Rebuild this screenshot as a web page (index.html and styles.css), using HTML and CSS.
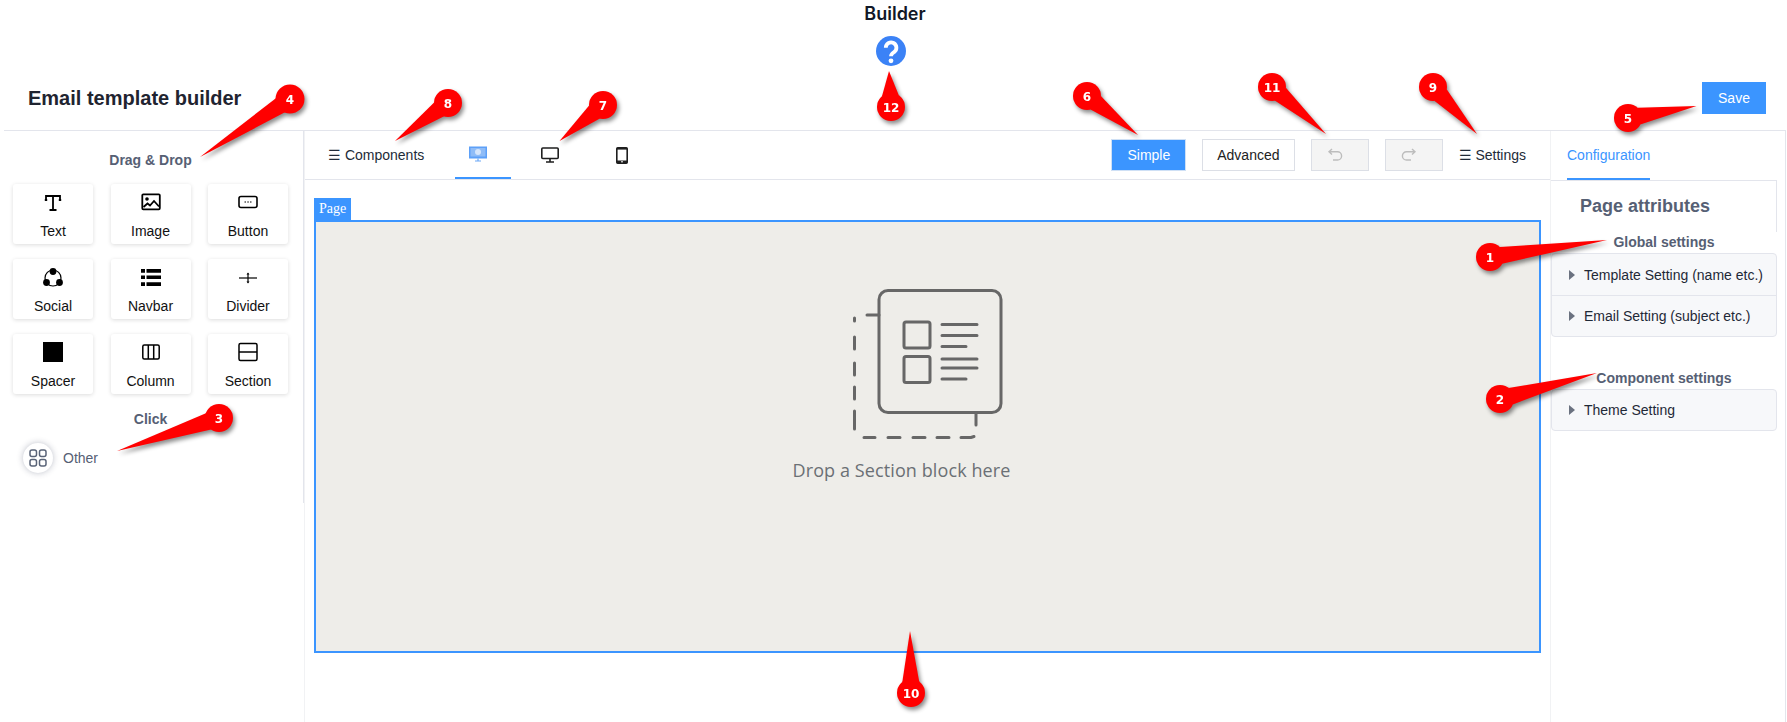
FILE: index.html
```html
<!DOCTYPE html>
<html lang="en">
<head>
  <meta charset="UTF-8" />
  <title>Builder</title>
  <link rel="stylesheet" href="styles.css">
</head>
<body>

  <div class="page-head">
    <h2 class="page-title">Builder</h2>
    <svg class="help-icon" viewBox="0 0 30 30">
      <circle cx="15" cy="15" r="15" fill="#3b82f6"/>
      <path d="M9.800 11.800a5.300 5.300 0 1 1 8.300 4.300c-1.900 1.300-3.100 2-3.100 4.200" fill="none" stroke="#fff" stroke-width="3.800"/>
      <circle cx="15" cy="24.800" r="2.400" fill="#fff"/>
    </svg>
  </div>

  <div class="title-row">
    <h1>Email template builder</h1>
    <button class="btn-save">Save</button>
  </div>

  <div class="builder">
    <aside class="left-panel">
      <div class="left-inner">
        <h4 class="panel-label">Drag &amp; Drop</h4>
        <div class="block-grid">
          <div class="block-card">
            <svg viewBox="0 0 20 20"><path d="M3 8V4h14v4M10 4v14M6.500 18h7M1.800 8h2.400M15.800 8h2.400" fill="none" stroke="#000" stroke-width="1.800"/></svg>
            <span>Text</span>
          </div>
          <div class="block-card">
            <svg viewBox="0 0 20 20"><rect x="1.300" y="2.300" width="17.500" height="15" rx="1" fill="none" stroke="#000" stroke-width="1.800"/><circle cx="6" cy="7" r="1.800"/><path d="M2.500 15l4-3.500 2.500 2 4-4.500 5 5.500" fill="none" stroke="#000" stroke-width="1.800"/></svg>
            <span>Image</span>
          </div>
          <div class="block-card">
            <svg viewBox="0 0 20 20"><rect x="1" y="4.500" width="18" height="11" rx="2" fill="none" stroke="#000" stroke-width="1.600"/><path d="M6.500 10h1.500M9.300 10h1.500M12 10h1.500" stroke="#000" stroke-width="1.200"/></svg>
            <span>Button</span>
          </div>
          <div class="block-card">
            <svg viewBox="0 0 20 20"><circle cx="10" cy="11" r="8" fill="none" stroke="#000" stroke-width="1.200"/><circle cx="10" cy="4.500" r="3.400"/><circle cx="3.500" cy="15.500" r="3.400"/><circle cx="16.500" cy="15.500" r="3.400"/></svg>
            <span>Social</span>
          </div>
          <div class="block-card">
            <svg viewBox="0 0 20 20"><path d="M0 2h4v3.700H0zM5.500 2H20v3.700H5.500zM0 8.500h4V12H0zM5.500 8.500H20V12H5.500zM0 15.300h4V19H0zM5.500 15.300H20V19H5.500z"/></svg>
            <span>Navbar</span>
          </div>
          <div class="block-card">
            <svg viewBox="0 0 20 20"><path d="M1 11h18" stroke="#000" stroke-width="1.200"/><path d="M10 6.500v9" stroke="#000" stroke-width="1.200"/><path d="M8.500 7.500L10 5.500l1.500 2zM8.500 14.500l1.500 2 1.500-2z"/></svg>
            <span>Divider</span>
          </div>
          <div class="block-card">
            <svg viewBox="0 0 20 20"><rect width="20" height="20"/></svg>
            <span>Spacer</span>
          </div>
          <div class="block-card">
            <svg viewBox="0 0 20 20"><rect x="1.800" y="3" width="16.400" height="14" rx="1.500" fill="none" stroke="#000" stroke-width="1.500"/><path d="M7.300 3v14M12.700 3v14" stroke="#000" stroke-width="1.500"/></svg>
            <span>Column</span>
          </div>
          <div class="block-card">
            <svg viewBox="0 0 20 20"><rect x="1" y="1.500" width="18" height="17" rx="1.500" fill="none" stroke="#000" stroke-width="1.500"/><path d="M1 10h18" stroke="#000" stroke-width="1.500"/></svg>
            <span>Section</span>
          </div>
        </div>
        <h4 class="panel-label panel-label-click">Click</h4>
        <div class="other-row">
          <div class="other-circle">
            <svg viewBox="0 0 18 18" fill="none" stroke="#5a6478" stroke-width="1.500"><rect x="1" y="1" width="6.500" height="6.500" rx="2"/><rect x="10.500" y="1" width="6.500" height="6.500" rx="2"/><rect x="1" y="10.500" width="6.500" height="6.500" rx="2"/><rect x="10.500" y="10.500" width="6.500" height="6.500" rx="2"/></svg>
          </div>
          <span>Other</span>
        </div>
      </div>
    </aside>

    <main class="center">
      <div class="toolbar">
        <div class="toolbar-left">
          <span class="menu-link">☰ Components</span>
          <div class="view-tab active">
            <svg viewBox="0 0 18 16"><rect y="0.500" width="18" height="12" fill="#5da0f8"/><rect x="1.500" y="2" width="15" height="8.500" fill="#8fbcf7"/><circle cx="9" cy="6" r="3" fill="#d5e5fb"/><path d="M6 15h6M9 12.500V15" stroke="#6aa8f8" stroke-width="1.200"/></svg>
          </div>
          <div class="view-tab">
            <svg viewBox="0 0 18 16"><rect x="0.800" y="1" width="16.400" height="10.500" rx="1" fill="none" stroke="#1f1f1f" stroke-width="1.600"/><path d="M9 11.500V15M5 15h8" stroke="#1f1f1f" stroke-width="1.600"/></svg>
          </div>
          <div class="view-tab">
            <svg class="phone" viewBox="0 0 12 17"><rect x="0.800" y="0.800" width="10.400" height="15.400" rx="1" fill="#fff" stroke="#1f1f1f" stroke-width="1.600"/><rect x="0.800" y="0.800" width="10.400" height="1.800" fill="#1f1f1f"/><rect x="0.800" y="13.500" width="10.400" height="2.700" fill="#1f1f1f"/><rect x="5" y="14.300" width="2" height="1" fill="#fff"/></svg>
          </div>
        </div>
        <div class="toolbar-right">
          <button class="btn-mode btn-on">Simple</button>
          <button class="btn-mode btn-adv">Advanced</button>
          <button class="btn-hist">
            <svg viewBox="0 0 16 14" fill="none" stroke="#bdbdbd" stroke-width="1.400"><path d="M5 1L2 3.800l3 2.800M2 3.800h8.500a4 4 0 0 1 0 8.200H6"/></svg>
          </button>
          <button class="btn-hist">
            <svg viewBox="0 0 16 14" fill="none" stroke="#bdbdbd" stroke-width="1.400"><path d="M11 1l3 2.800-3 2.800M14 3.800H5.500a4 4 0 0 0 0 8.200H10"/></svg>
          </button>
          <span class="menu-link">☰ Settings</span>
        </div>
      </div>

      <div class="canvas">
        <div class="page-tag">Page</div>
        <div class="page-box">
          <svg class="drop-icon" viewBox="0 0 150 150" fill="none" stroke="#676767" stroke-width="3" stroke-linecap="round">
            <rect x="26" y="1.500" width="122" height="122" rx="9"/>
            <path d="M26 26H14M123 124v12"/>
            <path d="M1.500 32v-3M1.500 48v12M1.500 74v12M1.500 98v12M1.500 122v18M11 148.500h11M35 148.500h12M60 148.500h12M84 148.500h12M108 148.500h10l3-1"/>
            <rect x="51" y="33" width="26" height="26" rx="2"/>
            <rect x="51" y="67.500" width="26" height="26" rx="2"/>
            <path d="M89 35.500h35M89 46.500h35M89 57.500h24M89 70h35M89 79h35M89 90h24"/>
          </svg>
          <p class="drop-text">Drop a Section block here</p>
        </div>
      </div>
    </main>

    <aside class="right-panel">
      <div class="right-tabs">
        <span class="right-tab">Configuration</span>
      </div>
      <div class="attr-box">
        <h3>Page attributes</h3>
      </div>
      <h4 class="panel-label">Global settings</h4>
      <div class="accordion">
        <div class="acc-item"><i class="caret"></i>Template Setting (name etc.)</div>
        <div class="acc-item"><i class="caret"></i>Email Setting (subject etc.)</div>
      </div>
      <h4 class="panel-label panel-label-comp">Component settings</h4>
      <div class="accordion accordion-single">
        <div class="acc-item"><i class="caret"></i>Theme Setting</div>
      </div>
    </aside>
  </div>

  <!-- numbered callouts drawn on top of the screenshot -->
  <svg class="callouts" viewBox="0 0 1787 722">
    <g class="pin"><path d="M200 157L285.400 112.100 276.200 97.900z"/><circle cx="290" cy="99" r="14.500"/><text x="290" y="103.500">4</text></g>
    <g class="pin"><path d="M395 141L444.100 116.300 434.100 102.500z"/><circle cx="448" cy="103" r="14"/><text x="448" y="107.500">8</text></g>
    <g class="pin"><path d="M559.500 141L599.900 118.500 589.100 105.500z"/><circle cx="603" cy="105" r="14"/><text x="603" y="109.500">7</text></g>
    <g class="pin"><path d="M889 71L898.900 95.500 881.900 96.500z"/><circle cx="891" cy="107" r="14"/><text x="891" y="111.500">12</text></g>
    <g class="pin"><path d="M1138 135L1090.500 109.400 1100.900 96z"/><circle cx="1087" cy="96" r="14"/><text x="1087" y="100.500">6</text></g>
    <g class="pin"><path d="M1326 134L1274.700 100.600 1285.900 87.800z"/><circle cx="1272" cy="87" r="14"/><text x="1272" y="91.500">11</text></g>
    <g class="pin"><path d="M1477 134L1434.300 100.800 1446.700 89.200z"/><circle cx="1433" cy="87" r="14"/><text x="1433" y="91.500">9</text></g>
    <g class="pin"><path d="M1696.500 106L1640.300 124.500 1637.300 107.700z"/><circle cx="1628" cy="118" r="14"/><text x="1628" y="122.500">5</text></g>
    <g class="pin"><path d="M1607 240L1502.100 263.800 1499.700 247z"/><circle cx="1490" cy="257" r="14"/><text x="1490" y="261.500">1</text></g>
    <g class="pin"><path d="M1597 373L1512.800 404.400 1508.400 388z"/><circle cx="1500" cy="399" r="14"/><text x="1500" y="403.500">2</text></g>
    <g class="pin"><path d="M117 451L211.100 429.500 205.900 413.300z"/><circle cx="219" cy="418" r="14"/><text x="219" y="422.500">3</text></g>
    <g class="pin"><path d="M910 631L919.300 681.900 902.300 682.100z"/><circle cx="911" cy="693" r="14"/><text x="911" y="697.500">10</text></g>
  </svg>

</body>
</html>
```

FILE: styles.css
```css
:root {
  --primary: #3b95ff;
  --line: #e3e5ec;
  --line-soft: #f1f2f4;
  --label: #566074;
  --text: #1f2937;
}

* {
  box-sizing: border-box;
}

html, body {
  height: 100%;
}

body {
  margin: 0;
  position: relative;
  overflow: hidden;
  font-family: "Liberation Sans", Arial, sans-serif;
  font-size: 14px;
  color: var(--text);
  background: #fff;
}

.page-head {
  height: 82px;
  display: flex;
  flex-direction: column;
  align-items: center;
}

.page-title {
  margin: 3px 0 0;
  height: 33px;
  padding-left: 3px;
  font-family: Inter, sans-serif;
  font-size: 18px;
  font-weight: 600;
  line-height: 21px;
  color: #111827;
}

.help-icon {
  width: 30px;
  height: 30px;
  margin-right: 5px;
}

.title-row {
  height: 48px;
  display: flex;
  justify-content: space-between;
  padding: 0 21px 0 28px;
}

.title-row h1 {
  margin: 4px 0 0;
  font-size: 20px;
  line-height: 24px;
  font-weight: 700;
  color: #1f2430;
}

.btn-save {
  width: 64px;
  height: 32px;
  border: none;
  background: var(--primary);
  color: #fff;
  font: 14px "Liberation Sans", Arial, sans-serif;
}

.builder {
  display: flex;
  height: 592px;
  margin-left: 4px;
  margin-right: 1px;
  border-top: 1px solid var(--line);
}

.left-panel {
  width: 300px;
  flex: none;
}

.left-inner {
  height: 372px;
  padding: 21px 15px 0 9px;
  border-right: 1px solid var(--line);
}

.panel-label {
  margin: 0;
  font-size: 14px;
  line-height: 16px;
  font-weight: 700;
  color: var(--label);
  text-align: center;
}

.block-grid {
  display: grid;
  grid-template-columns: 80px 80px 80px;
  column-gap: 17.500px;
  row-gap: 15px;
  margin-top: 16px;
}

.block-card {
  height: 60px;
  display: flex;
  flex-direction: column;
  align-items: center;
  padding-top: 8px;
  border-radius: 3px;
  box-shadow: 0 1px 4px rgba(0, 0, 0, 0.14);
  font-size: 14px;
  color: #111;
}

.block-card svg {
  width: 20px;
  height: 20px;
  margin-bottom: 11px;
}

.block-card span {
  line-height: 16px;
}

.panel-label-click {
  margin-top: 17px;
}

.other-row {
  display: flex;
  align-items: center;
  gap: 10px;
  margin: 16px 0 0 10px;
  color: var(--label);
}

.other-circle {
  width: 30px;
  height: 30px;
  display: flex;
  align-items: center;
  justify-content: center;
  border-radius: 50%;
  box-shadow: 0 0 6px rgba(40, 50, 80, 0.3);
}

.other-circle svg {
  width: 18px;
  height: 18px;
}

.center {
  width: 1247px;
  flex: none;
  border-left: 1px solid var(--line-soft);
  border-right: 1px solid var(--line-soft);
}

.toolbar {
  height: 49px;
  display: flex;
  justify-content: space-between;
  padding: 0 24px 0 23px;
  border-bottom: 1px solid var(--line);
}

.toolbar-left,
.toolbar-right {
  display: flex;
  align-items: center;
}

.menu-link {
  font-size: 14px;
  color: #222b38;
  white-space: nowrap;
}

.view-tab {
  width: 56px;
  height: 48px;
  display: flex;
  align-items: center;
  justify-content: center;
  margin-left: 31px;
  padding-right: 10px;
}

.view-tab + .view-tab {
  margin-left: 16px;
}

.view-tab.active {
  border-bottom: 2px solid var(--primary);
}

.view-tab svg {
  width: 18px;
  height: 16px;
}

.view-tab .phone {
  width: 12px;
  height: 17px;
}

.btn-mode {
  height: 32px;
  padding: 0 15px;
  margin-right: 16px;
  background: #fff;
  border: 1px solid #dcdfe6;
  color: #222;
  font: 14px "Liberation Sans", Arial, sans-serif;
}

.btn-on {
  background: var(--primary);
  border-color: #cfe0f5;
  color: #fff;
}

.btn-adv {
  padding: 0 14px;
}

.btn-hist {
  width: 58px;
  height: 32px;
  margin-right: 16px;
  display: flex;
  align-items: center;
  justify-content: center;
  padding: 0 10px 0 0;
  background: #f4f4f4;
  border: 1px solid #dcdfe6;
}

.btn-hist svg {
  width: 16px;
  height: 14px;
}

.canvas {
  padding: 18px 9px 0 9px;
}

.page-tag {
  width: 37px;
  height: 22px;
  padding-left: 5px;
  background: var(--primary);
  color: #fff;
  font-family: "Liberation Serif", serif;
  font-size: 14px;
  line-height: 22px;
}

.page-box {
  height: 433px;
  display: flex;
  flex-direction: column;
  align-items: center;
  padding-top: 67px;
  background: #eeede9;
  border: 2px solid var(--primary);
}

.drop-icon {
  width: 150px;
  height: 150px;
}

.drop-text {
  margin: 19px 52px 0 0;
  font-family: "Open Sans", sans-serif;
  font-size: 18px;
  letter-spacing: 0.1px;
  line-height: 24px;
  color: #6b7075;
}

.right-panel {
  flex: 1;
  min-width: 0;
  padding-right: 8px;
  border-right: 1px solid var(--line);
}

.right-tabs {
  height: 49px;
  padding-left: 16px;
}

.right-tab {
  display: inline-block;
  height: 49px;
  line-height: 48px;
  color: var(--primary);
  border-bottom: 2px solid var(--primary);
}

.attr-box {
  height: 52px;
  padding: 13px 0 0 29px;
  border-top: 1px solid var(--line);
  border-right: 1px solid var(--line);
}

.attr-box h3 {
  margin: 0;
  font-size: 18px;
  line-height: 24px;
  font-weight: 700;
  color: var(--label);
}

.accordion {
  margin-top: 3px;
  background: #f7f8fa;
  border: 1px solid var(--line);
  border-radius: 4px;
}

.acc-item {
  height: 41px;
  display: flex;
  align-items: center;
  padding-left: 17px;
  color: var(--text);
}

.accordion-single .acc-item {
  height: 40px;
}

.acc-item + .acc-item {
  border-top: 1px solid var(--line);
}

.caret {
  width: 0;
  height: 0;
  margin-right: 9px;
  border-left: 6px solid #6b7280;
  border-top: 5px solid transparent;
  border-bottom: 5px solid transparent;
}

.right-panel .panel-label {
  margin-top: 2px;
}

.right-panel .panel-label-comp {
  margin-top: 33px;
}

.callouts {
  position: absolute;
  left: 0;
  top: 0;
  width: 1787px;
  height: 722px;
  pointer-events: none;
}

.pin {
  fill: #ff0000;
  filter: drop-shadow(2px 3px 2px rgba(0, 0, 0, 0.45));
}

.pin text {
  fill: #fff;
  font-family: "DejaVu Sans", sans-serif;
  font-size: 12px;
  font-weight: 700;
  text-anchor: middle;
}
```
